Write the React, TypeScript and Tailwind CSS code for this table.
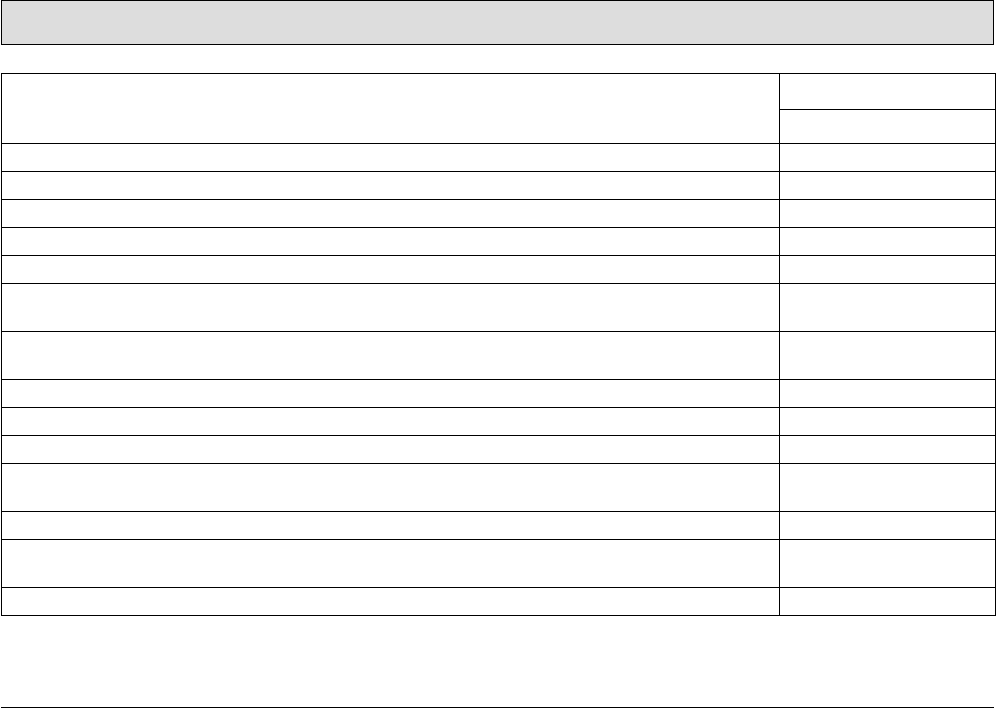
const rows = [28, 28, 28, 28, 28, 48, 48, 28, 28, 28, 48, 28, 48, 28]

const rowHeight: Record<number, string> = {
  28: "h-[28px]",
  48: "h-[48px]",
}

export default function App() {
  return (
    <div className="w-[996px] h-[708px] bg-white font-['Liberation_Sans',sans-serif] text-sm">
      <div className="ml-px w-[993px] h-[45px] border border-black bg-[#dddddd]" />

      <table className="ml-px mt-[28px] w-[995px] border-collapse table-fixed">
        <colgroup>
          <col className="w-[778px]" />
          <col />
        </colgroup>
        <tbody>
          <tr className="h-[36px]">
            <td rowSpan={2} className="border border-black" />
            <td className="border border-black" />
          </tr>
          <tr className="h-[34px]">
            <td className="border border-black" />
          </tr>
          {rows.map((h, i) => (
            <tr key={i} className={rowHeight[h]}>
              <td className="border border-black" />
              <td className="border border-black" />
            </tr>
          ))}
        </tbody>
      </table>

      <div className="ml-px mt-[91px] w-[993px] border-t border-black" />
    </div>
  )
}
